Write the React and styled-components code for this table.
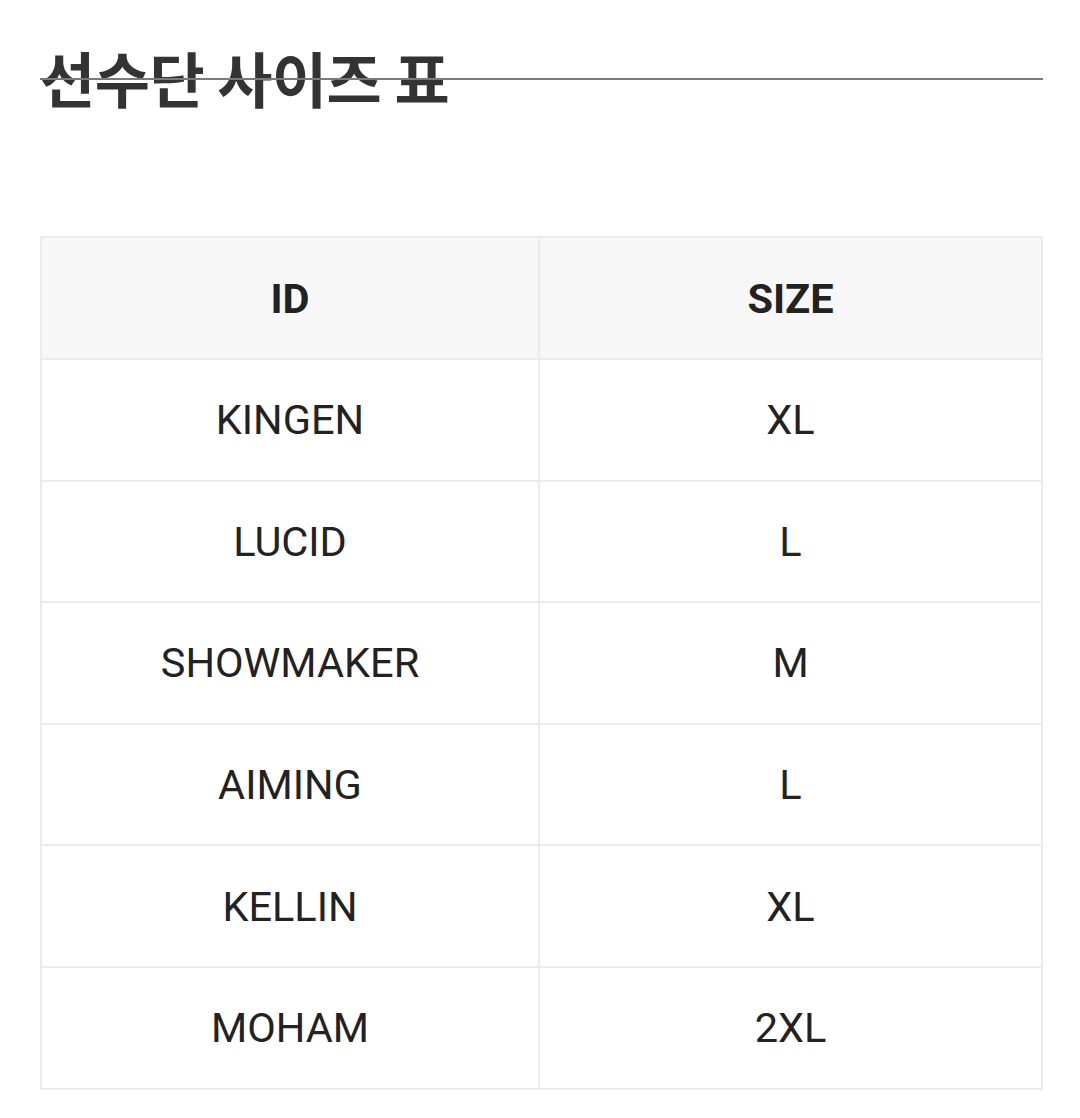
import React from 'react';
import styled, { createGlobalStyle } from 'styled-components';

const GlobalStyle = createGlobalStyle`
  body {
    margin: 0;
    background: #ffffff;
    font-family: Roboto, "Noto Sans CJK KR", sans-serif;
  }
`;

const Page = styled.div`
  width: 1080px;
  height: 1118px;
  box-sizing: border-box;
  padding: 38px 37px 0 40px;
`;

const Title = styled.h2`
  position: relative;
  margin: 0;
  height: 78px;
  font-family: "Noto Sans CJK KR", sans-serif;
  font-size: 60px;
  font-weight: 700;
  line-height: 78px;
  letter-spacing: -0.5px;
  color: #333333;
  &::after {
    content: '';
    position: absolute;
    left: 0;
    right: 0;
    top: 40px;
    height: 2px;
    background: #7a7a7a;
  }
`;

const Table = styled.table`
  width: 1003px;
  margin-top: 120px;
  border-collapse: collapse;
  border: 2px solid #ebebeb;
  table-layout: fixed;
`;

const HeadCell = styled.th`
  height: 120px;
  background: #f7f7f7;
  border: 2px solid #ebebeb;
  font-family: Roboto, sans-serif;
  font-size: 41.5px;
  font-weight: 700;
  color: #222222;
  text-align: center;
  padding: 0;
`;

const Cell = styled.td`
  height: 119.6px;
  border: 2px solid #ebebeb;
  font-family: Roboto, sans-serif;
  font-size: 41.5px;
  font-weight: 400;
  color: #222222;
  text-align: center;
  padding: 0;
`;

const players = [
  { id: 'KINGEN', size: 'XL' },
  { id: 'LUCID', size: 'L' },
  { id: 'SHOWMAKER', size: 'M' },
  { id: 'AIMING', size: 'L' },
  { id: 'KELLIN', size: 'XL' },
  { id: 'MOHAM', size: '2XL' },
];

export default function App() {
  return (
    <Page>
      <GlobalStyle />
      <Title>선수단 사이즈 표</Title>
      <Table>
        <colgroup>
          <col style={{ width: '498px' }} />
          <col />
        </colgroup>
        <thead>
          <tr>
            <HeadCell>ID</HeadCell>
            <HeadCell>SIZE</HeadCell>
          </tr>
        </thead>
        <tbody>
          {players.map((p) => (
            <tr key={p.id}>
              <Cell>{p.id}</Cell>
              <Cell>{p.size}</Cell>
            </tr>
          ))}
        </tbody>
      </Table>
    </Page>
  );
}
